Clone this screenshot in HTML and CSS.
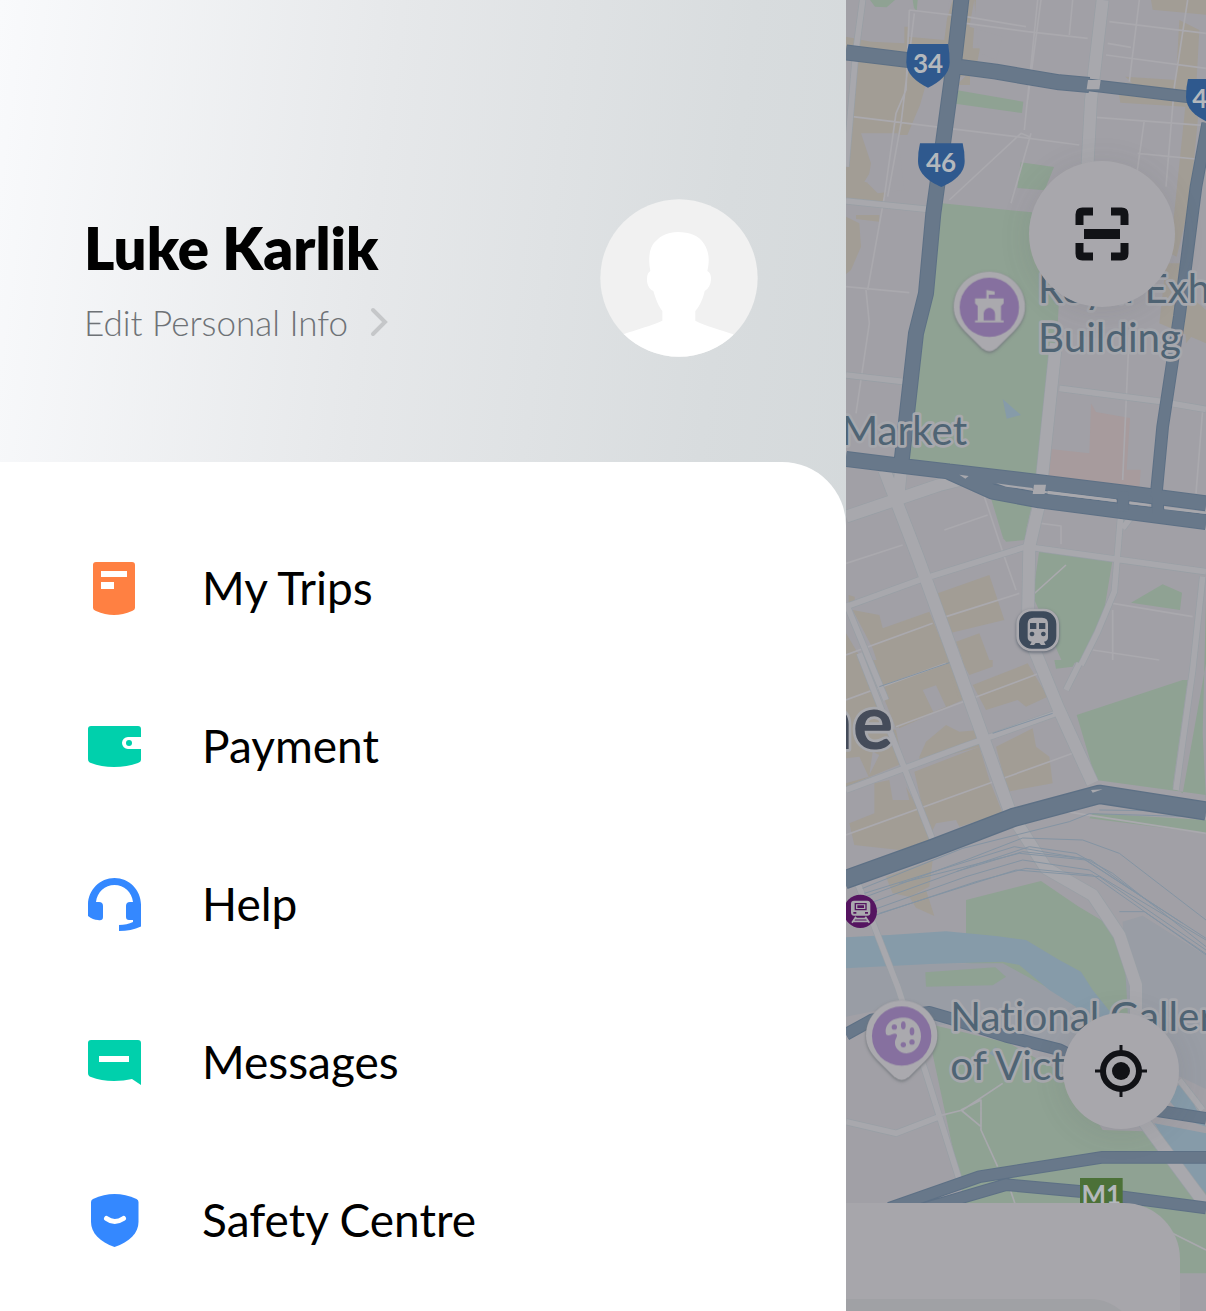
FILE: index.html
```html
<!DOCTYPE html>
<html lang="en">
<head>
<meta charset="utf-8">
<meta name="viewport" content="width=device-width, initial-scale=1">
<title>Account menu</title>
<link rel="stylesheet" href="styles.css">
</head>
<body>
<div class="app">
  <aside class="drawer">
    <header class="profile">
      <div class="identity">
        <h1 class="name">Luke Karlik</h1>
        <a class="edit" href="#profile">Edit Personal Info
          <svg class="chevron" viewBox="0 0 18 30" aria-hidden="true"><path d="M3 3l12 12L3 27"/></svg>
        </a>
      </div>
      <svg class="avatar" viewBox="0 0 474 474" role="img" aria-label="Profile picture">
        <defs><clipPath id="face"><circle cx="237" cy="237" r="236"/></clipPath></defs>
        <g clip-path="url(#face)">
          <path fill="#f1f1f1" d="M0 0h474v474H0z"/>
          <path fill="#fff" d="M187 336c-17-23-21-43-27-60-13-6-20-22-19-36 0-13 4-20 10-24-7-34-4-72 16-89 16-19 38-27 66-28 35 0 63 10 79 35 16 25 17 51 10 82 9 5 12 15 11 27-1 14-7 26-19 33-4 19-12 42-28 60v29c30 16 75 27 114 41v70H70v-70c39-15 87-26 117-41z"/>
        </g>
      </svg>
    </header>
    <nav class="menu" aria-label="Account">
      <a class="item" href="#trips">
        <svg class="icon" viewBox="0 0 54 54" aria-hidden="true"><path fill="#ff8042" d="M9 1h36q3 0 3 3v43q0 2-3 3-9 4-18 4T9 50q-3-1-3-3V4q0-3 3-3z"/><path fill="#fff" d="M14 10h26v6H14zM14 21h13v7H14z"/></svg>
        My Trips</a>
      <a class="item" href="#payment">
        <svg class="icon" viewBox="0 0 54 54" aria-hidden="true"><path fill="#00d0ac" d="M4 7h47q3 0 3 3v8H41a6 6 0 0 0 0 12h13v11q0 2-3 3-11 4-24 4T4 44q-3-1-3-4V10q0-3 3-3z"/><circle cx="42" cy="24" r="3" fill="#00d0ac"/></svg>
        Payment</a>
      <a class="item" href="#help">
        <svg class="icon" viewBox="0 0 54 54" aria-hidden="true"><path fill="#3488ff" d="M1 39V27.500C1 13 13 1 27.500 1S54 13 54 27.500v22Q44 54 32 54v-6q8 0 14-3v-2h-4q-3 0-3-3V29q0-4 4-4h3C45 15 37 8 27.500 8S10 15 9 25h3q4 0 4 4v11q0 4-5 3-5 0-10-4z"/></svg>
        Help</a>
      <a class="item" href="#messages">
        <svg class="icon" viewBox="0 0 54 54" aria-hidden="true"><path fill="#00d0ac" d="M4 5h47q3 0 3 3v42l-9-6q-8 2-18 2-13 0-23-4-3-1-3-4V8q0-3 3-3z"/><path fill="#fff" d="M12 21h30v6H12z"/></svg>
        Messages</a>
      <a class="item" href="#safety">
        <svg class="icon" viewBox="0 0 54 54" aria-hidden="true"><path fill="#3488ff" d="M27.500 1q11 0 22 5 2 1 2 3v20c0 11-9 20-24 25C13 49 4 40 4 29V9q0-2 2-3 11-5 21.500-5z"/><path fill="none" stroke="#fff" stroke-width="5" stroke-linecap="round" d="M19.500 25.500q8 6 17 0"/></svg>
        Safety Centre</a>
    </nav>
  </aside>

  <main class="map">
    <svg class="tiles" viewBox="0 0 1080 3933" preserveAspectRatio="xMinYMin slice" role="img" aria-label="City map">
      <g class="sand">
        <path d="M0 110l75 15 100 5V80h120L320 0h70l-10 145h22l-10 50-60 60h40v-30l-130 20-20 70-38 90H60L55 405l25 100-25 40 70 20-15 40H0V480l20-300H0z"/>
        <path d="M30 645h70v20l-70-8zM0 650l40 20 5 70-30 70-15 12zM915 0h165v44l-160-15zM838 230l152 10 10-180 60 30-12 220-30-5v15l-195-12-10-60h45zM1020 300l40 10-28 300-40 160-20-10z"/>
        <path d="M960 790h60l-10 80 70 60v100l-140-60zM1018 990h18v20l-16 20z"/>
        <path d="M275 1780l155-55 45 135-165 40zM330 1925l70-25 30 80h-80zM20 1830l80 15 10 40 140-50 60 145 40 120-190 85-80-240zM8 1785l18 5v25l-18-5z"/>
        <path d="M0 1900l60 100 60 190-120 40zM75 1980h225l40 120-190 85-50-125zM345 1980h95v20l-70 25zM380 2055l165-65 60 100-65 30-25-20-95 30z"/>
        <path d="M220 2270l20-45 60-50 40 20 60-5v50l-180 50zM205 2315l195-75 30 100 40 100-130 40-10-20-60 10-20 40zM450 2240l110-55 10 55 40 30 10 80-135 25zM0 2140l150 50 20 100-170 70z"/>
        <path d="M85 2350l45-10 10 60h50l-10-40 50 90 20 70-90 30-135-15-15-65 75-30z"/>
        <path d="M120 2630l140-50-10 80-60 30-50-10zM190 2690l50-20 25 78-55-25z"/>
      </g>
      <g class="block">
        <path d="M45 400h110l20 170-80 10-30-30 10-60zM190 0h120l-15 120-110-10zM385 0l-15 80 100 30-20 70-45-20-10-30zM230 2070l40-14 30 64-38 16zM0 2275l40-5 28 60-68 20zM100 2265l-30 60 10-70z"/>
      </g>
      <g class="park">
        <path d="M72 0h75l-25 22-35-2zM200 0h15l-3 32-8-8zM330 270l202 35-4 34-200-28zM524 487l100 14-28 70-82-7zM288 610l270 27 80 280-8 160-35 360-410-48 60-500z"/>
        <path d="M435 1495l125 10-20 85 0 30-60 5-10-15zM470 1615l65-8-40 15-12 3zM580 1650l220 28-30 180-70 130-50 0-90-200zM855 1808l95-55 58 25-6 52zM625 1980h65l-10 20-50 6z"/>
        <path d="M692 2145l318-105h15l-45 320 30 20 70-390v395l-330-45zM1080 1800l-10 400 10 200zM740 2440l340 20v40l-350-45zM360 2700l225-57 110 75 100 60 65 180v140h-140l-40-60-200-90-60-50-110-15-210-10 70-25 190-15z"/>
        <path d="M240 3070l250 60 180 100 100 160 310 10v420H450l-130-90 40-100z"/>
      </g>
      <path class="campus" d="M830 2765l60-18 190 120v400l-170-80-60-60zM0 2905l240-15 230 0 130 70 120 80 50 100-120 20-330-90-70 10-150-50-100 20z"/>
      <path class="park" d="M238 2917l210-15 32 28-40 26-200 4z"/>
      <path class="clinic" d="M735 1210l15 26 102 18-10 155 42 0-4 60-272-30 4-92 118 13z"/>
      <g class="water">
        <path d="M0 2812L130 2805 300 2794 450 2808 540 2820 640 2880 705 2915 740 2970 800 3045 830 3119H735L690 3020 610 2970 520 2895 470 2885 250 2892 0 2905zM470 1197l55 48-43 11zM430 3160l20-20 10 40zM925 3370l155 30v180l-80-90zM950 3280l60-30 70 130-60-20z"/>
      </g>

      <g class="lane">
        <path d="M190 30L180 270 150 340 115 590 65 870M205 40L165 370 125 590M190 30l170 20 180 30M575 0L535 390M585 0l-40 300M360 70l185 25 180 20M680 0l-10 105M880 0l-30 245M1025 0l-40 260-25 300M790 65l290 35M785 130l70 12M780 165l300 40M750 352l330 25M895 360l-25 180M875 460l205 20M20 350l490 60 190 25M310 600l215-200 25 10M495 610l60-210M0 860l190 18M60 870l10 100-40 270M850 990l-20 450"/>
        <path d="M295 1590l130-45M0 1690l170-55M415 1490l60 180 35 100M560 1785l100-90M585 1570l60 8v55M800 1810l240 40M800 1830v150M740 1950l200 30M1070 1230l-20 250M0 1965l260-95M300 1850l220-70M0 2100l300-110M150 2180l430-160M0 2505l430-155 250-90M660 2435l420 65"/>
      </g>
      <g class="casing">
        <path d="M50 0L30 150 0 500M0 603l245 25M0 1125l175 20M640 1165l310 40M975 1210l105 18M0 1820l220-80 320-100 540 75M825 1535l-20 240-50 120-50 100M860 1545l-30 40M1070 1730l-30 280-50 360M0 1810l120 290M40 1960l220 560M0 2370l350-130 280-100M700 1990l-40 80M35 2650l120 310 85 260 100 320M0 3365l150 35 130-50M1000 3240l70 90"/>
        <path class="wide" d="M770 0l-35 300-15 280M630 1030l-50 480-30 130-5 260 90 220 105 230M115 1410l100 260 120 330 155 430M0 1550l280-95 80-20M165 1410l-10 100M510 2465l90 140 140 80 80 120 50 150v250M890 3360l200 270"/>
      </g>
      <g class="street">
        <path d="M50 0L30 150 0 500M0 603l245 25M0 1125l175 20M640 1165l310 40M975 1210l105 18M0 1820l220-80 320-100 540 75M825 1535l-20 240-50 120-50 100M860 1545l-30 40M1070 1730l-30 280-50 360M0 1810l120 290M40 1960l220 560M0 2370l350-130 280-100M700 1990l-40 80M35 2650l120 310 85 260 100 320M0 3365l150 35 130-50M1000 3240l70 90"/>
        <path class="wide" d="M770 0l-35 300-15 280M630 1030l-50 480-30 130-5 260 90 220 105 230M115 1410l100 260 120 330 155 430M0 1550l280-95 80-20M165 1410l-10 100M510 2465l90 140 140 80 80 120 50 150v250M890 3360l200 270"/>
        <path class="path" d="M270 3350l80-20 120-80M345 3330l60-30v90l50 110M345 3330l60 50M490 3560l20 60M960 3690l120 60"/>
      </g>
      <g class="rail">
        <path d="M50 2665l300-120 200-50 120-30 60-24 350 10M60 2690l300-110 170-66 180 6 110 40 260 200M70 2710l330-120 150-50 140 20 110 60 280 220M80 2730l280-100 170-50 200 30 350 210M90 2745l300-100 150-40 200 20 340 240M330 2615l200-60 180 20 370 240M100 2740l410-130 250 20 320 220M820 2735h75l190 130M55 2680l450-140 230 40 180 130M760 2430l160 2 160 16"/>
        <path d="M100 2060l210-72M440 2200l180-60M160 2650l360-90 200 20 290 190"/>
      </g>
      <g class="artery-edge">
        <path d="M347-10L325 180 287 460 262 640 240 880 210 1000 165 1400M0 157l200 25 250 33 190 32 90 8M0 1377l180 22 370 44 280 34 250 33M300 1412l140 63 140 26 500 65"/>
        <path class="slim" d="M730 255l350 42M1085 370l-35 190-50 390-50 330-20 210M833 1475l-3 60M935 1480v60M0 3103l80-44 170-22 75 22 155 50 160 40 60 30M920 3330l160 25M130 3625l270-95 370-58h310M220 3630l260-76 220 20 380 50"/>
        <path class="broad" d="M-5 2640l265-95 240-92 260-70 320 50"/>
      </g>
      <g class="artery">
        <path d="M347-10L325 180 287 460 262 640 240 880 210 1000 165 1400M0 157l200 25 250 33 190 32 90 8M0 1377l180 22 370 44 280 34 250 33M300 1412l140 63 140 26 500 65"/>
        <path class="slim" d="M730 255l350 42M1085 370l-35 190-50 390-50 330-20 210M833 1475l-3 60M935 1480v60M0 3103l80-44 170-22 75 22 155 50 160 40 60 30M920 3330l160 25M130 3625l270-95 370-58h310M220 3630l260-76 220 20 380 50"/>
        <path class="broad" d="M-5 2640l265-95 240-92 260-70 320 50"/>
      </g>
      <path class="bridge" d="M726 240h38l-4 28h-38zM564 1454h36l-4 28h-36zM340 1424l28 4-10 8zM450 1450l110 14v6l-80-10zM605 1472l205 26v8l-205-24zM850 1505l60 8v6l-60-6zM955 1520l125 16v6l-125-14zM735 2370l35-2-30 10z"/>

      <g class="shield">
        <path d="M188 132h118q5 24 5 55c0 35-30 60-65 76-35-16-65-41-65-76q0-31 7-55z"/>
        <path d="M222 430h128q6 24 6 53c0 38-33 62-70 78-37-16-70-40-70-78q0-29 6-53z"/>
        <path d="M1026 237h128q6 24 6 53c0 38-33 62-70 78-37-16-70-40-70-78q0-29 6-53z"/>
        <path class="motorway" d="M702 3534h128v100H702z"/>
        <text x="246" y="218">34</text><text x="285" y="516">46</text><text x="1084" y="324">46</text><text x="766" y="3611">M1</text>
      </g>

      <g class="label">
        <text x="576" y="908">Royal Exhibition</text><text x="576" y="1055">Building</text>
        <text x="-16" y="1335">Market</text>
        <text x="313" y="3093">National Gallery</text><text x="313" y="3240">of Victoria</text>
        <text class="city" x="142" y="2247" text-anchor="end">Melbourne</text>
      </g>

      <g class="pin">
        <path id="drop" d="M430 815c60 0 107 47 107 105 0 32-14 52-34 74l-50 50q-23 20-46 0l-50-50c-20-22-34-42-34-74 0-58 47-105 107-105z"/>
        <circle cx="430" cy="922" r="89"/>
        <path class="glyph" fill-rule="evenodd" d="M421 870l25 4v10h-18v11h45v15l-8 8v43h8v6h-86v-6h8v-43l-8-8v-15h34zM413 961h34v-18c0-26-34-26-34 0z"/>
        <use href="#drop" x="-263" y="2186"/>
        <circle cx="167" cy="3108" r="89"/>
        <path class="glyph" d="M120 3102c-6-30 19-50 57-49 28 1 49 26 48 57-1 30-22 50-43 50-23-1-36-17-35-33 0-10 9-18 5-24-8-8-22 11-32-1z"/>
        <g class="dots"><circle cx="145" cy="3081" r="8"/><ellipse cx="172" cy="3076" rx="7" ry="12"/><ellipse cx="198" cy="3094" rx="7" ry="12"/><circle cx="198" cy="3126" r="8"/><circle cx="172" cy="3134" r="8"/></g>
      </g>

      <g class="station">
        <rect x="515" y="1830" width="120" height="120" rx="42"/>
        <path class="glyph" fill-rule="evenodd" d="M563 1853h25q18 0 18 18v41q0 12-12 13l5 10h-14l-5-6h-11l-5 6h-12l5-10q-12-1-12-13v-41q0-18 18-18zM552 1869v18h19v-18zM579 1869v18h19v-18zM558 1895a7 7 0 1 0 .1 0zM592 1895a7 7 0 1 0 .1 0z"/>
      </g>
      <g class="metro">
        <circle cx="43" cy="2734" r="50"/>
        <path class="glyph" fill-rule="evenodd" d="M24 2702h40q8 0 9 9v27q0 9-9 9H24q-8 0-9-9v-27q0-9 9-9zM26 2709v22h36v-22zM30 2713h28v14H30zM34 2716v8h20v-8zM22 2736v5h9v-5zM57 2736v5h9v-5z"/>
        <path class="track" d="M30 2750l-12 18M58 2750l12 18M26 2756h34M20 2764h48"/>
      </g>
    </svg>
    <button class="fab scan" type="button" aria-label="Scan code">
      <svg viewBox="0 0 54 54" aria-hidden="true"><path fill="none" stroke="#111216" stroke-width="8" d="M18 4.500H7.500q-3 0-3 3V18M36 4.500h10.500q3 0 3 3V18M49.500 36v10.500q0 3-3 3H36M18 49.500H7.500q-3 0-3-3V36"/><path fill="#111216" d="M9 22h36v10H9z"/></svg>
    </button>
    <button class="fab locate" type="button" aria-label="My location">
      <svg viewBox="0 0 54 54" aria-hidden="true"><g fill="none" stroke="#111216"><circle cx="27" cy="27" r="18" stroke-width="6"/><path stroke-width="3" d="M27 1v8M27 45v8M1 27h8M45 27h8"/></g><circle cx="27" cy="27" r="9" fill="#111216"/></svg>
    </button>
    <section class="sheet" aria-label="Ride options"><div class="search"></div></section>
  </main>
</div>
</body>
</html>
```
FILE: styles.css
```css
* { box-sizing: border-box; }

body {
  margin: 0;
  font-family: Lato, "Open Sans", sans-serif;
  font-variant-ligatures: none;
  color: #000;
}

.app {
  display: grid;
  grid-template-columns: 47fr 20fr;
  min-height: 100vh;
  overflow: hidden;
}

/* Drawer */
.drawer {
  display: flex;
  flex-direction: column;
  min-width: 0;
  background: linear-gradient(97deg, #f9fafc 0%, #e6e8ea 40%, #d8dcde 75%, #d2d7d9 100%);
}

.profile {
  display: flex;
  align-items: center;
  justify-content: space-between;
  gap: 24px;
  padding: 199px 88px 105px 84px;
}

.name {
  margin: 0;
  font-size: 58px;
  line-height: 72px;
  font-weight: 800;
}

.edit {
  display: flex;
  align-items: center;
  gap: 22px;
  margin-top: 16px;
  font-size: 35px;
  line-height: 44px;
  font-weight: 300;
  color: #6e7276;
  text-decoration: none;
}

.chevron {
  width: 18px;
  height: 30px;
  fill: none;
  stroke: #c5c7c9;
  stroke-width: 4;
  stroke-linecap: round;
}

.avatar {
  flex: none;
  width: 158px;
  height: 158px;
}

.menu {
  flex: 1;
  padding: 47px 0 12px;
  background: #fff;
  border-top-right-radius: 64px;
}

.item {
  display: flex;
  align-items: center;
  gap: 61px;
  height: 158px;
  padding: 0 87px;
  font-size: 46px;
  line-height: 56px;
  color: #000;
  text-decoration: none;
}

.icon {
  flex: none;
  width: 54px;
  height: 54px;
}

/* Map */
.map {
  position: relative;
  min-width: 0;
  overflow: hidden;
  background: #a1a0a6;
}

.tiles {
  position: absolute;
  inset: 0;
  width: 100%;
  height: 100%;
}

.sand { fill: #a29d95; }
.block { fill: #a1a0a6; }
.park { fill: #8fa293; }
.campus { fill: #999da5; }
.clinic { fill: #a79b9d; }
.water { fill: #869ba9; }
.lane, .casing, .street, .rail, .artery, .artery-edge { fill: none; stroke-linejoin: round; }
.lane { stroke: #aaa9ae; stroke-width: 5; }
.casing { stroke: #989fa5; stroke-width: 21; }
.casing .wide { stroke-width: 40; }
.street { stroke: #a8a8ad; stroke-width: 17; }
.street .wide { stroke-width: 36; }
.street .path { stroke-width: 5; }
.rail { stroke: #8494a3; stroke-width: 3; }
.artery-edge { stroke: #5d7085; stroke-width: 48; }
.artery-edge .slim { stroke-width: 38; }
.artery-edge .broad { stroke-width: 58; }
.artery { stroke: #68788a; stroke-width: 42; }
.artery .slim { stroke-width: 32; }
.artery .broad { stroke-width: 50; }
.bridge { fill: #a8a8ad; }

.shield { fill: #2f598e; }
.shield .motorway { fill: #4c7138; }
.shield text {
  fill: #b4b8bd;
  font-size: 78px;
  font-weight: 700;
  text-anchor: middle;
}

.label {
  fill: #4f6474;
  stroke: #a7a8ad;
  stroke-width: 16;
  stroke-linejoin: round;
  paint-order: stroke;
  font-size: 121px;
}
.label .city {
  fill: #454c5a;
  font-size: 228px;
  font-weight: 700;
}

.pin { fill: #aaa9ae; filter: drop-shadow(0 4px 5px #70757a); }
.pin circle, .pin ellipse { fill: #86709f; }
.pin .glyph { fill: #aaa9ae; }
.station rect {
  fill: #3d4a5b;
  stroke: #aaa9ae;
  stroke-width: 8;
  filter: drop-shadow(0 4px 4px #606874);
}
.station .glyph, .metro .glyph { fill: #aaa9ae; }
.metro { fill: #551560; }
.metro .track { fill: none; stroke: #aaa9ae; stroke-width: 5; }

.fab {
  position: absolute;
  display: grid;
  place-items: center;
  padding: 0;
  border: 0;
  border-radius: 50%;
  background: #a8a7ac;
  box-shadow: 0 4px 32px rgba(70, 75, 85, 0.12);
}
.fab svg { width: 54px; height: 54px; }
.scan { top: 161px; right: 31px; width: 146px; height: 146px; }
.locate { bottom: 182px; right: 27px; width: 116px; height: 116px; }

.sheet {
  position: absolute;
  left: 0;
  right: 26px;
  bottom: 0;
  height: 108px;
  padding: 96px 42px 0 0;
  overflow: hidden;
  background: #a7a6ab;
  border-top-right-radius: 56px;
}
.search {
  height: 64px;
  background: #a0a1a5;
  border-top-right-radius: 48px;
}
```
